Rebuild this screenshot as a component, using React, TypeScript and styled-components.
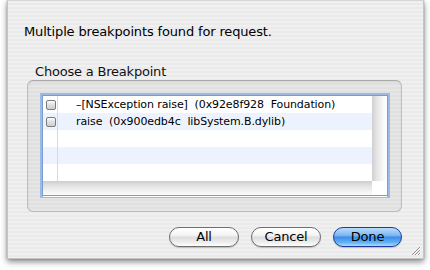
import React, { useState } from 'react';
import styled, { createGlobalStyle, css } from 'styled-components';

const GlobalStyle = createGlobalStyle`
  html, body {
    margin: 0;
    padding: 0;
    background: #ffffff;
  }
  body {
    font-family: "DejaVu Sans", "Liberation Sans", sans-serif;
    color: #000;
  }
`;

const Page = styled.div`
  width: 430px;
  height: 270px;
  padding-left: 7px;
  box-sizing: border-box;
`;

const Window = styled.div`
  position: relative;
  width: 417px;
  height: 259px;
  box-sizing: border-box;
  border: 1px solid #c4c4c4;
  border-top-color: #d6d6d6;
  background: repeating-linear-gradient(
    to bottom,
    #f0f0f0 0px,
    #f0f0f0 2px,
    #eaeaea 2px,
    #eaeaea 4px
  );
  box-shadow: 0 3px 6px rgba(0, 0, 0, 0.45), 0 0 2px rgba(0, 0, 0, 0.25);
  padding: 23px 21px 0 16px;
  display: flex;
  flex-direction: column;
`;

const Message = styled.div`
  font-size: 13px;
  line-height: 16px;
  letter-spacing: -0.15px;
`;

const GroupLabel = styled.div`
  margin-top: 24px;
  padding-left: 11px;
  font-size: 13px;
  line-height: 16px;
  letter-spacing: -0.2px;
  color: #111;
`;

const GroupBox = styled.div`
  height: 132px;
  margin-left: 3px;
  box-sizing: border-box;
  border: 1px solid #bdbdbd;
  border-top-color: #a9a9a9;
  border-radius: 6px;
  background: rgba(0, 0, 0, 0.04);
  box-shadow: inset 0 1px 2px rgba(0, 0, 0, 0.08);
  padding: 12px 11px 13px 12px;
  display: flex;
`;

const Table = styled.div`
  flex: 1;
  box-sizing: border-box;
  border: 3px solid #9bbbe4;
  outline: 1px solid #7a9dd0;
  outline-offset: -3px;
  background: #fff;
  display: grid;
  grid-template-columns: 1fr 15px;
  grid-template-rows: 1fr 16px;
`;

const Rows = styled.div`
  display: flex;
  flex-direction: column;
`;

const Row = styled.div<{ $alt: boolean }>`
  height: 17px;
  flex: none;
  display: flex;
  align-items: center;
  background: ${({ $alt }) => ($alt ? '#edf3fe' : '#ffffff')};
`;

const CheckCell = styled.div`
  width: 15px;
  height: 100%;
  box-sizing: border-box;
  border-right: 1px solid #d9d9d9;
  display: flex;
  align-items: center;
  justify-content: center;
  padding-left: 1px;
`;

const Check = styled.input.attrs({ type: 'checkbox' })`
  appearance: none;
  margin: 0;
  width: 10px;
  height: 10px;
  box-sizing: border-box;
  border: 1px solid #7b7b7b;
  border-radius: 2px;
  background: linear-gradient(to bottom, #fbfbfb 0%, #dcdcdc 55%, #cfcfcf 100%);
`;

const CellText = styled.div`
  padding-left: 18px;
  font-size: 11px;
  white-space: pre;
  letter-spacing: -0.1px;
  color: #000;
`;

const VScroll = styled.div`
  background: linear-gradient(to right, #cfcfcf 0%, #e4e4e4 30%, #f6f6f6 70%, #ffffff 100%);
`;

const HScroll = styled.div`
  background: linear-gradient(to bottom, #cdcdcd 0%, #e3e3e3 30%, #f5f5f5 70%, #ffffff 100%);
`;

const Corner = styled.div`
  background: #fff;
`;

const ButtonBar = styled.div`
  margin-top: 15px;
  display: flex;
  justify-content: flex-end;
  gap: 12px;
`;

const PushButton = styled.button<{ $primary?: boolean }>`
  width: 70px;
  height: 20px;
  margin: 0;
  padding: 0 0 1px;
  border-radius: 10px;
  font-family: "DejaVu Sans", "Liberation Sans", sans-serif;
  font-size: 13px;
  letter-spacing: -0.2px;
  color: #000;
  border: 1px solid #6e6e6e;
  background: linear-gradient(
    to bottom,
    #ffffff 0%,
    #f4f4f4 40%,
    #dedede 52%,
    #eeeeee 80%,
    #ffffff 100%
  );
  box-shadow: 0 1px 1px rgba(0, 0, 0, 0.2);
  ${({ $primary }) =>
    $primary &&
    css`
      width: 69px;
      border-color: #23379a;
      background: linear-gradient(
        to bottom,
        #bcdcfa 0%,
        #7fb9f2 40%,
        #3d8eea 52%,
        #5fb2f6 80%,
        #a9def9 100%
      );
    `}
`;

const Grip = styled.svg`
  position: absolute;
  right: 2px;
  bottom: 2px;
`;

const entries = [
  '\u2013[NSException raise]  (0x92e8f928  Foundation)',
  'raise  (0x900edb4c  libSystem.B.dylib)',
  '',
  '',
  '',
];

export default function App() {
  const [checked, setChecked] = useState<boolean[]>([false, false]);

  return (
    <Page>
      <GlobalStyle />
      <Window>
        <Message>Multiple breakpoints found for request.</Message>
        <GroupLabel>Choose a Breakpoint</GroupLabel>
        <GroupBox>
          <Table>
            <Rows>
              {entries.map((text, i) => (
                <Row key={i} $alt={i % 2 === 1}>
                  <CheckCell>
                    {text && (
                      <Check
                        checked={checked[i]}
                        onChange={() =>
                          setChecked((c) => c.map((v, j) => (j === i ? !v : v)))
                        }
                      />
                    )}
                  </CheckCell>
                  <CellText>{text}</CellText>
                </Row>
              ))}
            </Rows>
            <VScroll />
            <HScroll />
            <Corner />
          </Table>
        </GroupBox>
        <ButtonBar>
          <PushButton>All</PushButton>
          <PushButton>Cancel</PushButton>
          <PushButton $primary>Done</PushButton>
        </ButtonBar>
        <Grip width="11" height="11" viewBox="0 0 11 11">
          <path d="M10 2 L2 10 M10 5 L5 10 M10 8 L8 10" stroke="#8a8a8a" strokeWidth="1" />
          <path d="M11 2 L3 10 M11 5 L6 10 M11 8 L9 10" stroke="#ffffff" strokeWidth="1" />
        </Grip>
      </Window>
    </Page>
  );
}
